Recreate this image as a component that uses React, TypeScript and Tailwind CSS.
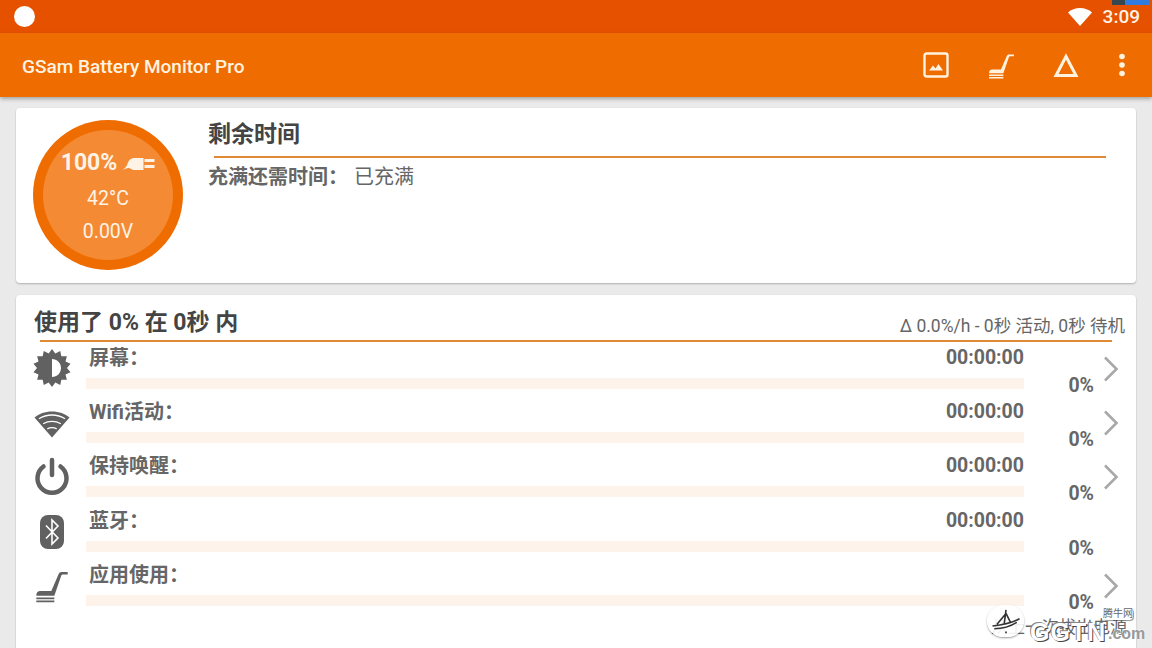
import type { ReactNode } from "react";

const cjk = "font-['Roboto','Noto_Sans_CJK_SC',sans-serif]";

// 14 spikes around the brightness icon
const sunPoints = Array.from({ length: 28 }, (_, i) => {
  const r = i % 2 === 0 ? 19 : 15;
  const a = (i * Math.PI) / 14 - Math.PI / 2;
  return `${(19 + r * Math.cos(a)).toFixed(2)},${(19 + r * Math.sin(a)).toFixed(2)}`;
}).join(" ");

const SeatIcon = ({ className }: { className: string }) => (
  <svg viewBox="0 0 26 26" className={className} fill="currentColor">
    <path d="M1 20.500c0-2.200 1-3.600 3-3.600h8.500L18 4c.5-1.200 1.200-1.700 2.300-1.700H25v1.900h-3.700c-.6 0-1 .3-1.200.8L14.800 20.500z" />
    <path d="M1 21.700h13.800v1.500H1zM1 24h13.800v1.500H1z" />
  </svg>
);

const BrightnessIcon = () => (
  <svg viewBox="0 0 38 38" className="-mt-[3px] w-[38px] h-[38px] text-[#616161]" fill="currentColor">
    <polygon points={sunPoints} />
    <path d="M19 10c5 0 9 4 9 9s-4 9-9 9z" fill="#fff" />
  </svg>
);

const WifiIcon = () => (
  <svg viewBox="0 0 36 30" className="mt-[2px] w-[36px] h-[30px] text-[#616161]" fill="currentColor">
    <path d="M18 29.500 0.500 9.500C5 5.700 11 3.500 18 3.500s13 2.200 17.500 6z" />
    <path d="M5 10.700C8.500 8.400 13 7 18 7s9.500 1.400 13 3.700M9.200 15.800c2.500-1.500 5.500-2.400 8.800-2.400s6.300.9 8.800 2.400M13.300 20.800c1.400-.7 3-1.100 4.700-1.100s3.300.4 4.700 1.100" fill="none" stroke="#fff" strokeWidth="1.300" />
  </svg>
);

const PowerIcon = () => (
  <svg viewBox="0 0 36 38" className="-mt-[3px] w-[36px] h-[38px] text-[#616161]" fill="none" stroke="currentColor" strokeWidth="4.500" strokeLinecap="round">
    <path d="M18 3v15" />
    <path d="M9.500 9.500a14.500 14.500 0 1 0 17 0" />
  </svg>
);

const BluetoothIcon = () => (
  <svg viewBox="0 0 26 36" className="-mt-[1px] w-[26px] h-[36px] text-[#616161]">
    <rect x="1" y="1" width="24" height="34" rx="8" fill="currentColor" />
    <path d="M7 11.500 19 24l-6 6V6l6 6L7 24.500" fill="none" stroke="#fff" strokeWidth="1.600" />
  </svg>
);

const Chevron = () => (
  <svg viewBox="0 0 16 26" className="w-[16px] h-[26px]" fill="none" stroke="#a8a8a8" strokeWidth="2.600">
    <path d="M2 1.500 13.500 13 2 24.500" />
  </svg>
);

const rows: { icon: ReactNode; label: string; time?: string; chevron: boolean }[] = [
  { icon: <BrightnessIcon />, label: "屏幕：", time: "00:00:00", chevron: true },
  { icon: <WifiIcon />, label: "Wifi活动：", time: "00:00:00", chevron: true },
  { icon: <PowerIcon />, label: "保持唤醒：", time: "00:00:00", chevron: true },
  { icon: <BluetoothIcon />, label: "蓝牙：", time: "00:00:00", chevron: false },
  { icon: <SeatIcon className="w-[34px] h-[34px] text-[#616161]" />, label: "应用使用：", chevron: true },
];

const UsageRow = ({ icon, label, time, chevron }: (typeof rows)[number]) => (
  <div className="flex h-[54.4px]">
    <div className="w-[70px] pl-[1px] pt-[9px] flex justify-center items-start h-[54.4px]">{icon}</div>
    <div className="w-[938px]">
      <div className="flex justify-between items-center h-[29px] pt-[1px] pl-[3px] text-[20px] leading-[26px] font-bold text-[#666]">
        <span>{label}</span>
        <span className="text-[19.5px]">{time}</span>
      </div>
      <div className="h-[11px] mt-[6px] bg-[#fdf3ea]" />
    </div>
    <div className="w-[70px] pt-[29px] text-right text-[19.5px] leading-[28px] font-bold text-[#666]">0%</div>
    <div className="pl-[9px] pt-[13px]">{chevron && <Chevron />}</div>
  </div>
);

const Watermark = () => (
  <div className="absolute right-[7px] bottom-[2px] w-[158px] h-[42px] pointer-events-none">
    <div className="absolute left-[0px] top-[1px] w-[37px] h-[32px] rounded-full bg-white/90 shadow-[0_1px_2px_rgba(0,0,0,0.4)] flex items-center justify-center">
      <svg viewBox="0 0 40 34" className="w-[36px] h-[31px]" fill="none" stroke="#333" strokeWidth="1.800">
        <path d="M5 22c9-1 20-3 30-8M20 4l-2 16M20 8l-10 12M20 8l5 10M7 25c8 0 17-2 25-7M20 28v2" />
      </svg>
    </div>
    <span className="absolute left-[43px] top-[13px] text-[25px] leading-[30px] font-bold tracking-[1px] text-white [text-shadow:1px_1px_0_#444,-1px_-1px_0_#888] font-['Liberation_Sans',sans-serif] whitespace-nowrap">
      GGTN
    </span>
    <span className="absolute left-[121px] top-[20px] text-[16px] leading-[20px] font-bold text-[#999] [text-shadow:0_0_2px_#fff] font-['Liberation_Sans',sans-serif]">
      .com
    </span>
    <span className="absolute left-[116px] top-[4px] text-[10px] leading-[12px] text-[#666] bg-white rounded-[4px] shadow-[1px_1px_1px_rgba(0,0,0,0.4)] whitespace-nowrap">腾牛网</span>
  </div>
);

export default function App() {
  return (
    <div className={`relative w-[1152px] h-[648px] overflow-hidden bg-[#eaeaea] ${cjk}`}>
      {/* Status bar */}
      <div className="relative flex items-center h-[33px] bg-[#e65100] pl-[14px] pr-[12px]">
        <div className="w-[21px] h-[21px] rounded-full bg-white" />
        <div className="absolute right-[3px] top-0 flex h-[5px]">
          <div className="w-[13px] bg-[#37474f]" />
          <div className="w-[24px] bg-[#2f7be0]" />
        </div>
        <svg viewBox="0 0 24 18" className="ml-auto w-[24px] h-[18px]" fill="#fff">
          <path d="M12 18 0 4.500C3.300 1.700 7.400 0 12 0s8.700 1.700 12 4.500z" />
        </svg>
        <span className="ml-[11px] text-[19px] leading-[24px] font-medium text-[#fff3e6]">3:09</span>
      </div>

      {/* App bar */}
      <div className="flex items-center h-[64px] bg-[#ef6c00] pl-[22px] shadow-[0_2px_4px_rgba(0,0,0,0.3)] relative text-[#fff3e0]">
        <span className="pt-[5px] text-[19px] font-medium">GSam Battery Monitor Pro</span>
        <div className="ml-auto flex items-center">
          <svg viewBox="0 0 26 26" className="w-[26px] h-[26px]" fill="none" stroke="currentColor" strokeWidth="2.400">
            <rect x="1.500" y="1.500" width="23" height="23" rx="2" />
            <path d="M6 18.500l4-5 2.500 3 3-4.500 4.500 6.500z" fill="currentColor" stroke="none" />
          </svg>
          <SeatIcon className="ml-[39px] w-[27px] h-[27px]" />
          <svg viewBox="0 0 26 26" className="ml-[38px] w-[26px] h-[26px]" fill="none" stroke="currentColor" strokeWidth="3">
            <path d="M13 4.500 23 23.500H3z" />
          </svg>
          <svg viewBox="0 0 8 24" className="ml-[39px] mr-[26px] w-[8px] h-[24px]" fill="currentColor">
            <circle cx="4" cy="3.500" r="2.800" />
            <circle cx="4" cy="12" r="2.800" />
            <circle cx="4" cy="20.500" r="2.800" />
          </svg>
        </div>
      </div>

      {/* Time remaining card */}
      <div className="flex mt-[11px] mx-[16px] h-[175px] bg-white rounded-[4px] shadow-[0_1px_2px_rgba(0,0,0,0.25)]">
        <div className="ml-[17px] mt-[12px] w-[150px] h-[150px] shrink-0 rounded-full bg-[#ef6c00] flex items-center justify-center">
          <div className="w-[130px] h-[130px] rounded-full bg-[#f48a33] flex flex-col items-center text-[#fff3e6]">
            <div className="flex items-center mt-[17px] h-[32px]">
              <span className="text-[23px] font-bold leading-[32px]">100%</span>
              <svg viewBox="0 0 32 16" className="ml-[5px] w-[33px] h-[16px]" fill="currentColor">
                <path d="M0 15c2-2 4-3 5-6 1-4 4-6 7-6h9v12h-9c-3 0-4-2-6-2-2 0-4 1-6 2z" />
                <path d="M22 4h10v3H22zM22 10h10v3H22z" />
              </svg>
            </div>
            <span className="text-[19.5px] leading-[26px] mt-[7px]">42°C</span>
            <span className="text-[19.5px] leading-[26px] mt-[7px]">0.00V</span>
          </div>
        </div>
        <div className="ml-[25px] flex-1 pr-[30px]">
          <div className="mt-[13px] h-[35px] text-[23px] leading-[28px] font-bold text-[#444]">剩余时间</div>
          <div className="ml-[6px] h-[1.5px] bg-[#e08a33]" />
          <div className="flex items-center mt-[6px] h-[26px]">
            <span className="text-[20px] font-bold text-[#666]">充满还需时间：</span>
            <span className="ml-[6px] text-[20px] text-[#666]">已充满</span>
          </div>
        </div>
      </div>

      {/* Usage card */}
      <div className="relative mt-[12px] mx-[16px] h-[360px] bg-white rounded-[4px] shadow-[0_1px_2px_rgba(0,0,0,0.25)]">
        <div className="flex items-center justify-between h-[45px] ml-[18px] mr-[11px] pt-[12px]">
          <span className="text-[23px] font-bold text-[#444]">使用了 0% 在 0秒 内</span>
          <span className="mt-[5px] text-[17.5px] text-[#666]">Δ 0.0%/h - 0秒 活动, 0秒 待机</span>
        </div>
        <div className="ml-[24px] mr-[24px] h-[1.5px] bg-[#e08a33]" />
        <div className="mt-[1px]">
          {rows.map((row) => (
            <UsageRow key={row.label} {...row} />
          ))}
        </div>
        <span className="absolute right-[9px] bottom-[15px] text-[17px] text-[#666]">从上一次拔出电源</span>
      </div>
      <Watermark />
    </div>
  );
}
